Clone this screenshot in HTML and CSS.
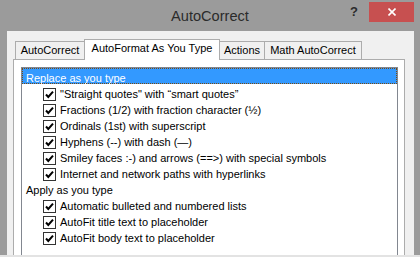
FILE: index.html
```html
<!DOCTYPE html>
<html lang="en">
<head>
  <meta charset="UTF-8" />
  <title>AutoCorrect</title>
  <link rel="stylesheet" href="styles.css">
</head>
<body>
  <div class="window">
    <div class="titlebar">
      <div></div>
      <div class="title">AutoCorrect</div>
      <div class="caption-buttons">
        <span class="help">?</span>
        <span class="close">
          <svg width="8" height="8" viewBox="0 0 8 8"><path d="M0.5 0.5 L7.5 7.5 M7.5 0.5 L0.5 7.5" stroke="#fff" stroke-width="1.6" fill="none"/></svg>
        </span>
      </div>
    </div>
    <div class="client">
      <div class="tabs">
        <div class="tab tab-first">AutoCorrect</div>
        <div class="tab active">AutoFormat As You Type</div>
        <div class="tab tab-actions">Actions</div>
        <div class="tab tab-math">Math AutoCorrect</div>
      </div>
      <div class="panel">
        <div class="list">
          <div class="row head selected">Replace as you type</div>
          <div class="row item"><span class="cb"><svg width="11" height="11" viewBox="0 0 11 11"><path d="M2 5.5 L4.3 8 L9 2.6" stroke="#000" stroke-width="2" fill="none"/></svg></span>"Straight quotes" with “smart quotes”</div>
          <div class="row item"><span class="cb"><svg width="11" height="11" viewBox="0 0 11 11"><path d="M2 5.5 L4.3 8 L9 2.6" stroke="#000" stroke-width="2" fill="none"/></svg></span>Fractions (1/2) with fraction character (½)</div>
          <div class="row item"><span class="cb"><svg width="11" height="11" viewBox="0 0 11 11"><path d="M2 5.5 L4.3 8 L9 2.6" stroke="#000" stroke-width="2" fill="none"/></svg></span>Ordinals (1st) with superscript</div>
          <div class="row item"><span class="cb"><svg width="11" height="11" viewBox="0 0 11 11"><path d="M2 5.5 L4.3 8 L9 2.6" stroke="#000" stroke-width="2" fill="none"/></svg></span>Hyphens (--) with dash (—)</div>
          <div class="row item"><span class="cb"><svg width="11" height="11" viewBox="0 0 11 11"><path d="M2 5.5 L4.3 8 L9 2.6" stroke="#000" stroke-width="2" fill="none"/></svg></span>Smiley faces :-) and arrows (==&gt;) with special symbols</div>
          <div class="row item"><span class="cb"><svg width="11" height="11" viewBox="0 0 11 11"><path d="M2 5.5 L4.3 8 L9 2.6" stroke="#000" stroke-width="2" fill="none"/></svg></span>Internet and network paths with hyperlinks</div>
          <div class="row head">Apply as you type</div>
          <div class="row item"><span class="cb"><svg width="11" height="11" viewBox="0 0 11 11"><path d="M2 5.5 L4.3 8 L9 2.6" stroke="#000" stroke-width="2" fill="none"/></svg></span>Automatic bulleted and numbered lists</div>
          <div class="row item"><span class="cb"><svg width="11" height="11" viewBox="0 0 11 11"><path d="M2 5.5 L4.3 8 L9 2.6" stroke="#000" stroke-width="2" fill="none"/></svg></span>AutoFit title text to placeholder</div>
          <div class="row item"><span class="cb"><svg width="11" height="11" viewBox="0 0 11 11"><path d="M2 5.5 L4.3 8 L9 2.6" stroke="#000" stroke-width="2" fill="none"/></svg></span>AutoFit body text to placeholder</div>
        </div>
      </div>
    </div>
  </div>
</body>
</html>
```
FILE: styles.css
```css
body {
  margin: 0;
  padding: 0;
  width: 420px;
  height: 257px;
  overflow: hidden;
  background: #e3e3e3;
  font-family: "Liberation Sans", Arial, sans-serif;
}

.window {
  width: 420px;
  height: 255px;
  background: #9b9b9b;
  display: flex;
  flex-direction: column;
}

.titlebar {
  height: 31px;
  display: grid;
  grid-template-columns: 1fr auto 1fr;
  flex-shrink: 0;
}

.title {
  font-size: 14.6px;
  color: #2b2b2b;
  line-height: 31px;
  padding-top: 1px;
}

.caption-buttons {
  display: flex;
  justify-content: flex-end;
  align-items: flex-start;
  padding-right: 6px;
}

.help {
  font-size: 13px;
  font-weight: bold;
  color: #2b2b2b;
  margin-top: 4px;
  margin-right: 11px;
}

.close {
  width: 45px;
  height: 20px;
  margin-top: 2px;
  background: #c75050;
  display: flex;
  justify-content: center;
  align-items: center;
}

.client {
  flex: 1;
  margin: 0 6px 0 7px;
  background: #f0f0f0;
  display: flex;
  flex-direction: column;
}

.tabs {
  display: flex;
  align-items: flex-end;
  height: 20px;
  margin: 8px 0 0 8px;
  font-size: 11px;
  color: #000;
}

.tab {
  box-sizing: border-box;
  height: 18px;
  line-height: 16px;
  border: 1px solid #acacac;
  border-bottom: none;
  background: #f0f0f0;
  text-align: center;
  white-space: nowrap;
}

.tab-first {
  width: 69px;
  border-right: none;
}

.tab.active {
  width: 136px;
  height: 21px;
  margin-bottom: -1px;
  background: #fff;
  position: relative;
  z-index: 1;
}

.tab-actions {
  width: 45px;
  border-left: none;
}

.tab-math {
  width: 97px;
  border-left: none;
}

.panel {
  flex: 1;
  margin: 0 9px 0 6px;
  border: 1px solid #acacac;
  border-bottom: none;
  background: #fff;
  padding: 7px 6px 0 7px;
}

.list {
  border: 1px solid #828790;
  border-bottom: none;
  height: 100%;
  box-sizing: border-box;
  font-size: 11px;
  color: #000;
}

.row {
  box-sizing: border-box;
  height: 16px;
  padding-top: 3px;
  line-height: 14px;
  white-space: nowrap;
  display: flex;
  align-items: flex-start;
}

.row.head {
  padding-left: 4px;
}

.row.selected {
  background: #3399ff;
  color: #fff;
  outline: 1px dotted #7a4a10;
  outline-offset: -1px;
}

.row.item {
  padding-left: 21px;
}

.cb {
  box-sizing: border-box;
  width: 13px;
  height: 13px;
  border: 1px solid #333;
  background: #fff;
  margin-top: 1px;
  margin-right: 4px;
  display: flex;
  flex-shrink: 0;
}
```
